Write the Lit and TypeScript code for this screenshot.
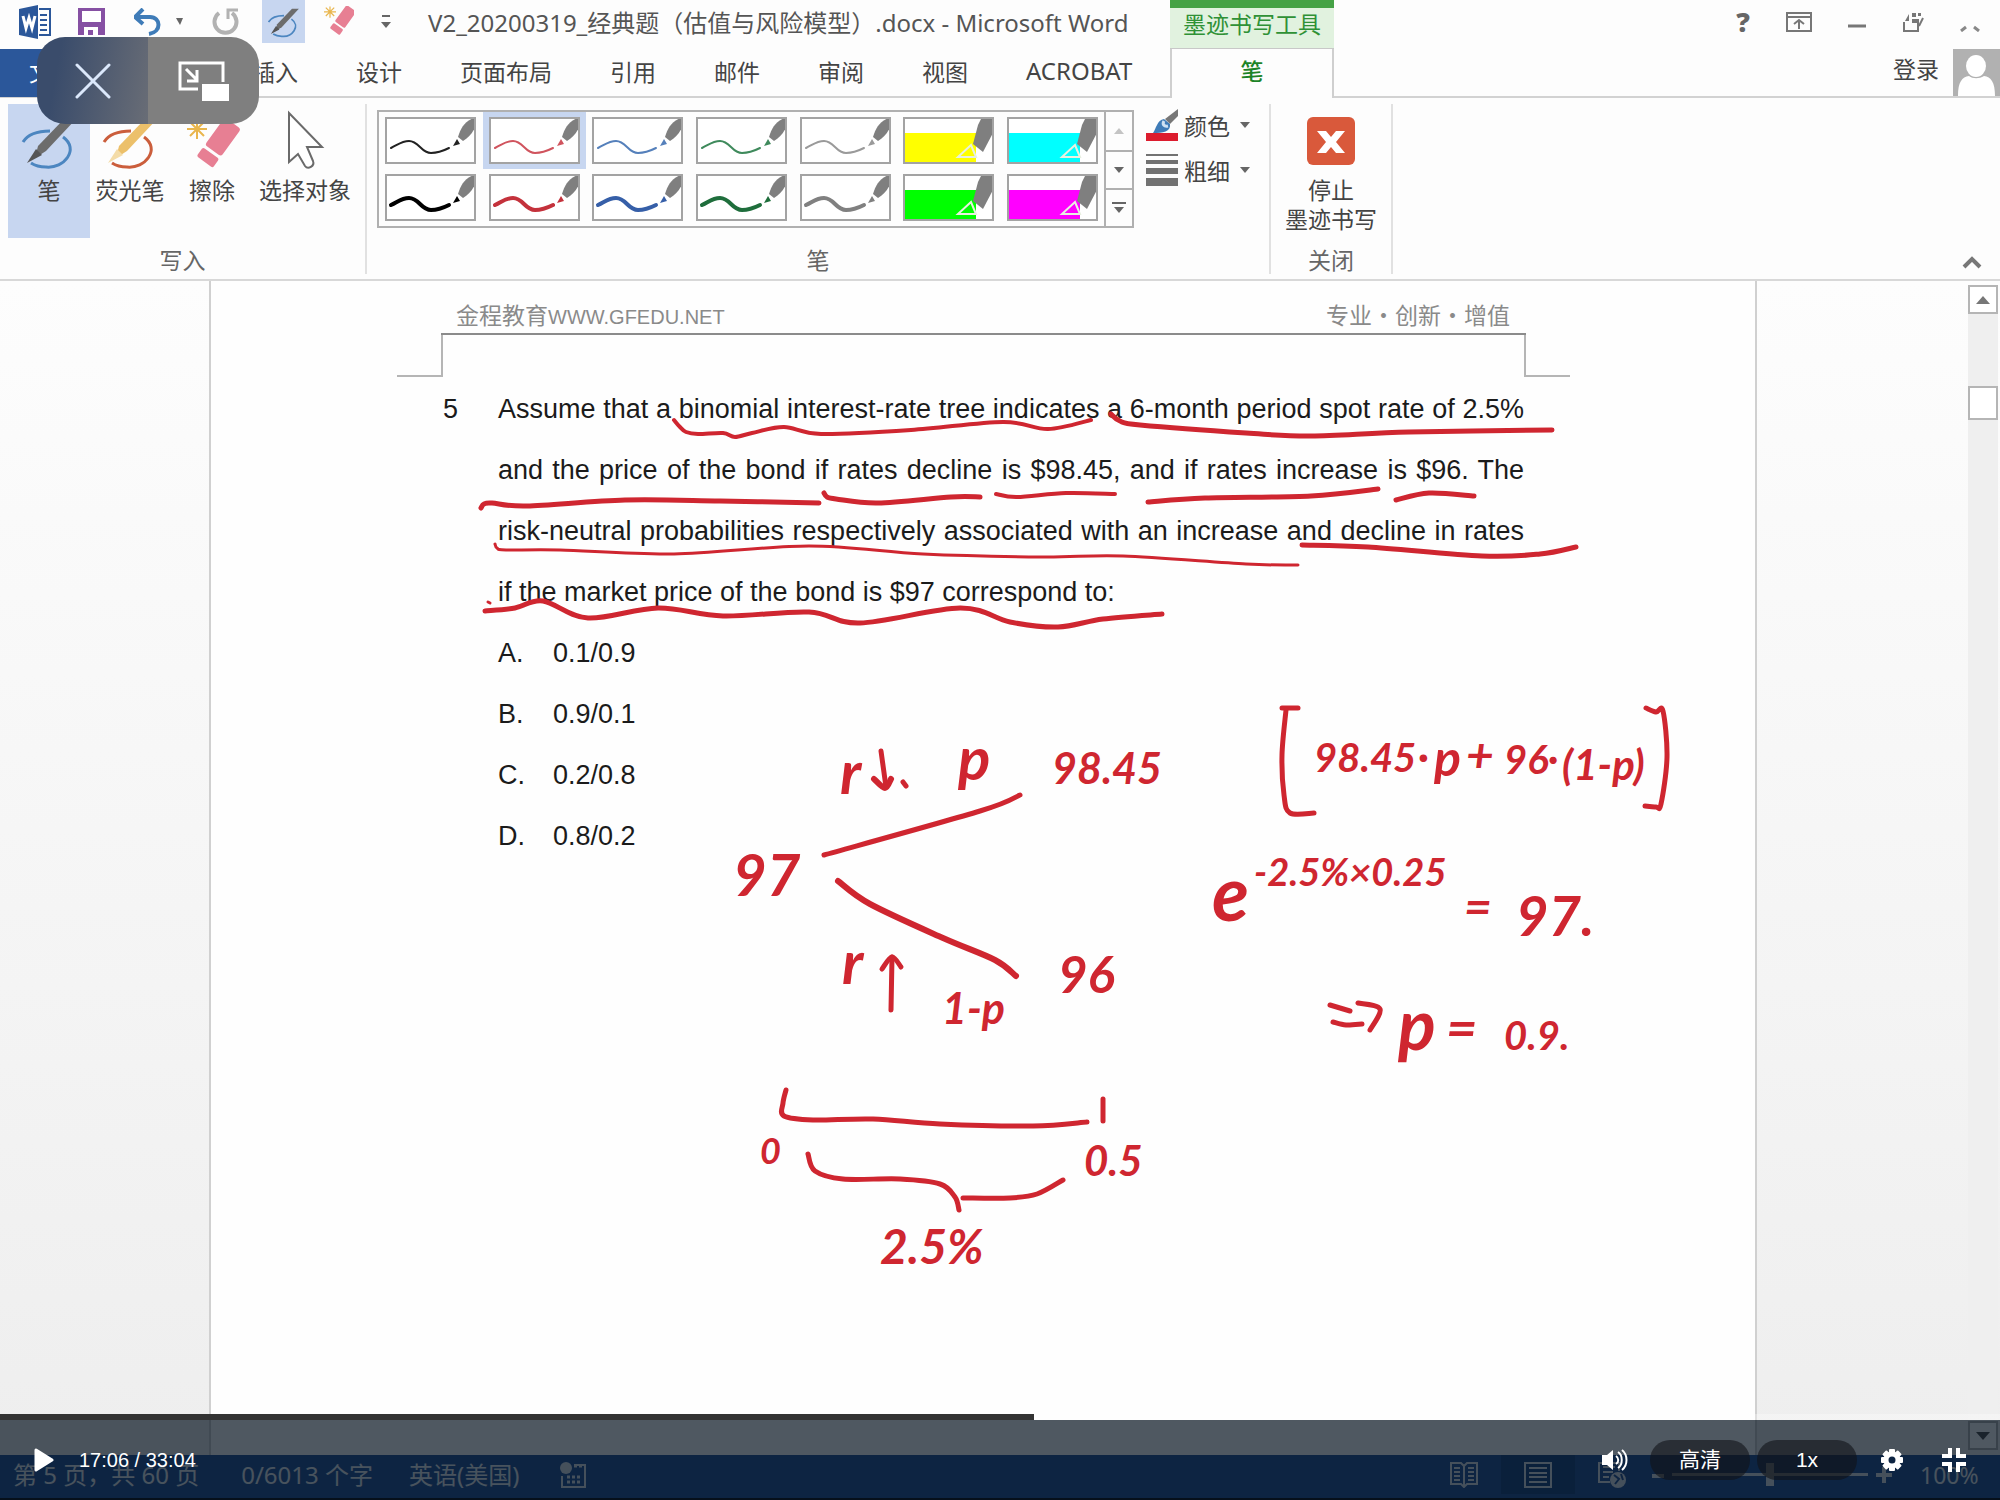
import { LitElement, html, svg, css } from "lit";
import { customElement } from "lit/decorators.js";
import { classMap } from "lit/directives/class-map.js";
import { styleMap } from "lit/directives/style-map.js";

type Point = [number, number];
interface Stroke { w: number; pts: Point[]; }
interface Note { x: number; y: number; size: number; text: string; }

/** Turns the sampled pen positions into one smooth curve. */
function smooth(pts: Point[]): string {
  let d = `M${pts[0][0]} ${pts[0][1]}`;
  for (let i = 0; i < pts.length - 1; i++) {
    const a = pts[i - 1] ?? pts[i];
    const b = pts[i];
    const c = pts[i + 1];
    const e = pts[i + 2] ?? c;
    d += `C${b[0] + (c[0] - a[0]) / 6} ${b[1] + (c[1] - a[1]) / 6} ${c[0] - (e[0] - b[0]) / 6} ${c[1] - (e[1] - b[1]) / 6} ${c[0]} ${c[1]}`;
  }
  return d;
}

const underlines: Stroke[] = [
  { w: 4, pts: [[674, 420], [680, 427], [686, 432], [698, 434], [723, 433], [735, 437], [752, 433], [784, 427], [821, 434], [911, 430], [1003, 422], [1048, 429], [1091, 420]] },
  { w: 5, pts: [[1111, 414], [1120, 421], [1140, 425], [1246, 433], [1311, 436], [1409, 432], [1552, 430]] },
  { w: 5, pts: [[481, 508], [484, 504], [492, 503], [527, 506], [625, 500], [720, 501], [819, 503]] },
  { w: 5, pts: [[824, 493], [827, 497], [836, 499], [878, 503], [951, 497], [980, 497]] },
  { w: 4, pts: [[996, 494], [1017, 497], [1066, 493], [1115, 494]] },
  { w: 5, pts: [[1148, 502], [1205, 498], [1311, 496], [1378, 489]] },
  { w: 5, pts: [[1396, 500], [1429, 493], [1474, 496]] },
  { w: 3, pts: [[495, 544], [497, 548], [506, 550], [560, 550], [674, 554], [809, 546], [923, 554], [1042, 557], [1123, 556], [1246, 564], [1298, 565]] },
  { w: 5, pts: [[1302, 545], [1368, 547], [1482, 556], [1540, 554], [1576, 547]] },
  { w: 5, pts: [[485, 611], [515, 608], [543, 601], [588, 618], [658, 608], [723, 616], [809, 612], [860, 623], [960, 608], [1010, 622], [1058, 627], [1103, 619], [1162, 614]] },
  { w: 3, pts: [[488, 602], [490, 603]] },
];

const diagram: Stroke[] = [
  { w: 5, pts: [[824, 855], [980, 811], [1020, 795]] },
  { w: 6, pts: [[838, 881], [870, 904], [943, 938], [995, 960], [1016, 976]] },
  { w: 5, pts: [[786, 1090], [783, 1103], [784, 1116], [813, 1120], [873, 1119], [940, 1124], [1033, 1126], [1087, 1122]] },
  { w: 5, pts: [[1103, 1099], [1103, 1121]] },
  { w: 5, pts: [[808, 1154], [815, 1171], [843, 1179], [900, 1179], [940, 1184], [955, 1197], [959, 1210]] },
  { w: 5, pts: [[963, 1198], [1010, 1198], [1037, 1194], [1063, 1180]] },
  { w: 5, pts: [[881, 751], [886, 787]] },
  { w: 6, pts: [[874, 779], [885, 788], [891, 779]] },
  { w: 5, pts: [[903, 782], [906, 786]] },
  { w: 5, pts: [[891, 1010], [892, 957]] },
  { w: 5, pts: [[882, 969], [892, 957], [901, 967]] },
  { w: 5, pts: [[1282, 708], [1298, 708]] },
  { w: 5, pts: [[1286, 710], [1282, 755], [1284, 795], [1290, 813], [1314, 813]] },
  { w: 5, pts: [[1646, 708], [1656, 712], [1663, 711], [1667, 757], [1661, 804], [1656, 807], [1645, 806]] },
  { w: 5, pts: [[1330, 1005], [1350, 1011]] },
  { w: 5, pts: [[1333, 1022], [1346, 1025], [1362, 1024]] },
  { w: 5, pts: [[1358, 1003], [1380, 1009], [1370, 1030]] },
];

const notes: Note[] = [
  { x: 840, y: 794, size: 60, text: "r" },
  { x: 958, y: 780, size: 60, text: "p" },
  { x: 1052, y: 784, size: 43, text: "98.45" },
  { x: 733, y: 896, size: 58, text: "97" },
  { x: 842, y: 984, size: 60, text: "r" },
  { x: 942, y: 1024, size: 43, text: "1-p" },
  { x: 1058, y: 993, size: 51, text: "96" },
  { x: 760, y: 1164, size: 36, text: "0" },
  { x: 1084, y: 1176, size: 42, text: "0.5" },
  { x: 880, y: 1264, size: 48, text: "2.5%" },
  { x: 1314, y: 772, size: 40, text: "98.45" },
  { x: 1418, y: 770, size: 40, text: "·" },
  { x: 1434, y: 776, size: 50, text: "p" },
  { x: 1466, y: 772, size: 48, text: "+" },
  { x: 1504, y: 774, size: 40, text: "96" },
  { x: 1548, y: 772, size: 38, text: "·" },
  { x: 1562, y: 780, size: 42, text: "(1-p)" },
  { x: 1212, y: 921, size: 76, text: "e" },
  { x: 1254, y: 886, size: 38, text: "-2.5%×0.25" },
  { x: 1464, y: 924, size: 48, text: "=" },
  { x: 1516, y: 936, size: 56, text: "97." },
  { x: 1398, y: 1050, size: 70, text: "p" },
  { x: 1446, y: 1047, size: 54, text: "=" },
  { x: 1504, y: 1050, size: 40, text: "0.9." },
];

interface Pen { color: string; weight: number; marker?: boolean; name: string; on?: boolean; }
const pens: Pen[] = [
  { name: "黑色细笔", color: "#222", weight: 2 },
  { name: "红色细笔", color: "#d0545e", weight: 2, on: true },
  { name: "蓝色细笔", color: "#5580bb", weight: 2 },
  { name: "绿色细笔", color: "#3f8a5c", weight: 2 },
  { name: "灰色细笔", color: "#9a9a9a", weight: 2 },
  { name: "黄色荧光笔", color: "#ffff00", weight: 0, marker: true },
  { name: "青色荧光笔", color: "#00ffff", weight: 0, marker: true },
  { name: "黑色粗笔", color: "#000", weight: 4 },
  { name: "红色粗笔", color: "#c4323c", weight: 4 },
  { name: "蓝色粗笔", color: "#365fa8", weight: 4 },
  { name: "绿色粗笔", color: "#1f6e3c", weight: 4 },
  { name: "灰色粗笔", color: "#808080", weight: 4 },
  { name: "绿色荧光笔", color: "#00ff00", weight: 0, marker: true },
  { name: "品红荧光笔", color: "#ff00ff", weight: 0, marker: true },
];

const penPreview = (p: Pen) => html`<svg class="preview" viewBox="2 2 87 43" preserveAspectRatio="none" aria-hidden="true">
  ${p.marker
    ? svg`<rect x="0" y="16" width="73" height="30" fill=${p.color}></rect>
        <path d="M68 28 55 40 73 40z" fill="none" stroke="#e8f0e0" stroke-width="2"></path>
        <path d="M70 27 75 8 79 0 91 0 91 14 80 35z" fill="#7f7f7f"></path>`
    : svg`<path d="M6 31C14 27 17 24 24 24 34 24 36 36 46 36 53 36 58 34 64 31" fill="none" stroke=${p.color} stroke-width=${p.weight} stroke-linecap="round"></path>
        <path d="M68 29 72 22 75 27z" fill=${p.color}></path>
        <path d="M73 20C76 10 80 4 91 0L91 8C89 14 84 21 78 24z" fill="#7f7f7f"></path>`}
</svg>`;

const caret = html`<svg class="caret" viewBox="0 0 10 6" aria-hidden="true"><path d="M0 0H10L5 6z" fill="#666"></path></svg>`;

const penIcon = (ring: string, body: string, tip: string) => svg`
  <path d="M1 19C6 11 16 8 28 8" fill="none" stroke=${ring} stroke-width="3"></path>
  <path d="M41 14C58 26 42 46 24 44 17 44 12 42 9 40" fill="none" stroke=${ring} stroke-width="3"></path>
  <path d="M42 -4H54L24 28 13 35 16 23z" fill=${body}></path>
  <path d="M14 26 20 32 5 40z" fill=${tip}></path>`;

const eraserIcon = svg`
  <g stroke="#e9b64d" stroke-width="2"><path d="M10 0V19M0 9H20M3 2 17 16M17 2 3 16"></path></g>
  <g transform="rotate(36 32 24)"><rect x="21" y="-1" width="20" height="34" rx="3" fill="#e77f93"></rect>
  <rect x="21" y="36" width="20" height="11" rx="2" fill="#e77f93"></rect></g>`;

@customElement("app-root")
export class AppRoot extends LitElement {
  static styles = css`
    :host { display: block; color: #444; font: 23px/30px "Noto Sans CJK SC", sans-serif; }
    * { box-sizing: border-box; }
    button { margin: 0; padding: 0; border: 0; background: none; color: inherit; font: inherit; }
    svg { display: block; flex: none; }
    .app { position: relative; display: flex; flex-direction: column; min-height: 100vh; overflow: hidden; background: #fdfdfd; }

    .top { display: grid; grid-template-columns: 1170px 164px 1fr; grid-template-rows: 49px 49px; }
    .quick { display: flex; align-items: flex-start; padding-left: 18px; }
    .quick button { height: 43px; display: grid; place-items: center; }
    .q-word { width: 34px; } .q-save { width: 27px; margin-left: 26px; }
    .q-undo { width: 30px; margin-left: 28px; } .q-more { width: 22px; margin-left: 5px; }
    .q-redo { width: 28px; margin-left: 22px; }
    .q-pen { width: 43px; margin-left: 22px; background: #c7d6f0; }
    .q-eraser { width: 32px; margin-left: 18px; } .q-over { width: 20px; margin-left: 21px; }
    .title { margin: 0 0 0 32px; font: 400 24px/46px "Noto Sans", "Noto Sans CJK SC", sans-serif; color: #555; white-space: nowrap; }
    .context { border-top: 8px solid #45a245; border-bottom: 1px solid #c8c8c8; background: #e1f2df; color: #2f9136; text-align: center; line-height: 30px; }
    .window { display: flex; justify-content: flex-end; align-items: center; gap: 36px; padding: 0 20px 6px 0; }
    .window button { display: grid; place-items: center; }
    .help { font: 900 27px/27px "Open Sans", sans-serif; color: #666; }
    .tabs { display: flex; border-bottom: 2px solid #d2d2d2; line-height: 42px; }
    .tabs button { padding: 0 29px 4px; white-space: nowrap; }
    .tabs .file { width: 119px; background: #2b579a; color: #fff; text-align: left; margin-bottom: -1px; }
    .tabs .acrobat { font-family: "Noto Sans", sans-serif; font-size: 24px; }
    .pen-tab { padding-bottom: 6px; border: 2px solid #cfcfcf; border-width: 0 2px; color: #1d8427; font-weight: 500; line-height: 43px; }
    .account { display: flex; justify-content: flex-end; gap: 14px; border-bottom: 2px solid #d2d2d2; line-height: 38px; }
    .login { color: inherit; text-decoration: none; }
    .avatar { width: 47px; height: 47px; }

    .ribbon { display: flex; padding: 6px 0 5px; border-bottom: 2px solid #d8d8d8; }
    .group { display: flex; flex-direction: column; border-right: 2px solid #e1e1e1; }
    .group-body { display: flex; height: 142px; align-items: flex-start; }
    .group-name { text-align: center; color: #666; line-height: 26px; padding-bottom: 2px; }
    .write { width: 367px; }
    .write .group-body { padding-left: 8px; }
    .tool { display: flex; flex-direction: column; align-items: center; gap: 2px; padding-top: 16px; height: 134px; white-space: nowrap; }
    .tool.pen { width: 82px; background: #c7d6f0; } .tool.marker { width: 80px; }
    .tool.eraser { width: 84px; } .tool.select { width: 102px; }
    .tool svg { overflow: visible; }
    .pens { width: 904px; }
    .pens .group-body { padding-left: 10px; }
    .gallery { display: flex; width: 757px; margin-top: 6px; border: 2px solid #b0b0b0; }
    .swatches { flex: 1; display: grid; grid-template-columns: repeat(7, 1fr); grid-auto-rows: 57px; }
    .swatch { display: grid; place-items: center; }
    .swatch.on { background: #c7d6f0; }
    .preview { width: 91px; height: 47px; border: 2px solid #a3a3a3; background: #fff; }
    .scroll { width: 28px; border-left: 2px solid #b0b0b0; display: grid; grid-template-rows: repeat(3, 1fr); }
    .scroll button { display: grid; place-items: center; }
    .scroll button + button { border-top: 2px solid #b0b0b0; }
    .options { margin-left: 12px; }
    .options button { display: flex; align-items: center; gap: 6px; height: 45px; padding-bottom: 4px; }
    .caret { width: 10px; height: 6px; }
    .options .caret { margin-left: 4px; }
    .close { width: 122px; }
    .stop { flex: 1; display: flex; flex-direction: column; align-items: center; gap: 10px; padding-top: 13px; line-height: 29px; white-space: nowrap; }
    .collapse { align-self: flex-end; margin: 0 18px 5px auto; }

    .document { flex: 1; display: flex; background: linear-gradient(#fdfdfd, #eee); }
    .page { position: relative; flex: 1; margin-left: 209px; padding: 0 185px 0 186px; min-height: 1100px; border: 2px solid #d0d0d0; border-width: 0 2px; background: #fefefe; }
    .gutter { width: 211px; }
    .ink { position: absolute; left: -2px; top: 0; width: 1548px; height: 1130px; overflow: visible; pointer-events: none; }
    .ink path { fill: none; stroke: #cf2630; stroke-linecap: round; stroke-linejoin: round; }
    .ink text { fill: #cf2630; font-family: Lato, sans-serif; font-style: italic; font-weight: 700; }
    .head { display: flex; justify-content: space-between; margin: 0 44px; padding: 15px 16px 0 15px; border-bottom: 2px solid #8b8b8b; color: #8a8a8a; height: 54px; line-height: 36px; }
    .head .site { font: 20px/36px "Liberation Sans", sans-serif; }
    .marks { display: flex; justify-content: space-between; height: 42px; }
    .mark { width: 46px; border: 2px solid #b5b5b5; border-width: 0 2px 2px 0; }
    .mark.end { border-width: 0 0 2px 2px; }
    .question { display: grid; grid-template-columns: 55px 1fr; margin: 2px 46px 0; color: #1b1b1b; font: 27px/61px "Liberation Sans", sans-serif; }
    .question p, .answers { margin: 0; }
    .full { display: block; text-align: justify; text-align-last: justify; white-space: nowrap; }
    .answers { grid-column: 2; padding: 0; list-style: none; }
    .answers li { display: grid; grid-template-columns: 55px 1fr; }
    .bar { width: 30px; margin: 4px 2px 5px 0; display: flex; flex-direction: column; background: #efefef; }
    .bar button { height: 29px; border: 2px solid #b5b5b5; display: grid; place-items: center; background: #fff; }
    .thumb { height: 34px; margin-top: 72px; border: 2px solid #b5b5b5; background: #fff; }
    .bar .down { margin-top: auto; }

    .status { display: flex; align-items: center; height: 45px; padding: 0 18px 4px 13px; border-bottom: 2px solid #14181f; background: #2b579a; color: #e8eef2; white-space: nowrap; font-size: 24px; font-family: "Noto Sans", "Noto Sans CJK SC", sans-serif; }
    .status .words { margin-left: 42px; } .status .lang { margin: 0 41px 0 36px; }
    .views { display: flex; align-self: stretch; margin-left: auto; }
    .views button { width: 74px; display: grid; place-items: center; }
    .views .on { background: #234a86; }
    .zoom { display: flex; align-items: center; gap: 8px; margin-left: 3px; }
    .zoom input { appearance: none; width: 196px; height: 24px; margin: 0; background: linear-gradient(#dde4ec, #dde4ec) center / 100% 3px no-repeat; }
    .zoom input::-webkit-slider-thumb { appearance: none; width: 8px; height: 23px; background: #dde4ec; }
    .zoom output { width: 62px; margin-left: 20px; font-size: 23px; }

    .pip { position: absolute; left: 37px; top: 37px; width: 222px; height: 87px; display: grid; grid-template-columns: 1fr 1fr; border-radius: 28px; overflow: hidden; }
    .pip button { display: grid; place-items: center; background: #7f7f7f; }
    .pip .exit { background: linear-gradient(100deg, #3a4c6b 20%, #696d76); }
    .player { position: absolute; left: 0; right: 0; bottom: 0; color: #fff; }
    .seek { appearance: none; display: block; width: 100%; height: 6px; margin: 0; }
    .seek::-webkit-slider-thumb { appearance: none; width: 0; height: 0; }
    .controls { display: flex; align-items: center; height: 80px; padding: 0 34px; background: rgba(0, 13, 26, 0.69); }
    .controls button { display: grid; place-items: center; }
    .time { margin-left: 25px; font: 20px/30px "Liberation Sans", sans-serif; }
    .volume { margin: 0 22px 0 auto; }
    .controls .pill { width: 100px; height: 40px; margin-right: 7px; border-radius: 20px; background: rgba(16, 18, 24, 0.6); font: 21px/40px "Liberation Sans", "Noto Sans CJK SC", sans-serif; }
    .controls .gear { margin: 0 38px 0 16px; }
  `;

  private renderTop() {
    return html`<header class="top">
      <div class="quick">
        <button class="q-word" aria-label="Word"><svg width="34" height="34" viewBox="0 0 34 34">
          <path d="M1 4 20 0V34L1 30z" fill="#2b579a"></path><path d="M21 4H32V30H21" fill="none" stroke="#2b579a" stroke-width="2"></path>
          <path d="M22 10H29M22 15H29M22 20H29M22 25H29" stroke="#2b579a" stroke-width="2"></path>
          <path d="M5 11 8 23 11 13 14 23 17 11" fill="none" stroke="#fff" stroke-width="3"></path></svg></button>
        <button class="q-save" aria-label="保存"><svg width="27" height="27" viewBox="0 0 27 27">
          <path d="M0 0H27V27H0z" fill="#8650a3"></path><path d="M4 3H23V14H4z" fill="#fff"></path><path d="M6 19H20V27H15V22H10V27H6z" fill="#fff"></path></svg></button>
        <button class="q-undo" aria-label="撤消"><svg width="28" height="28" viewBox="0 0 28 28">
          <path d="M3 9H16C27 9 28 24 15 26" fill="none" stroke="#3f7cb8" stroke-width="4"></path><path d="M9 1 1 9 9 16" fill="none" stroke="#3f7cb8" stroke-width="4"></path></svg></button>
        <button class="q-more" aria-label="撤消列表"><svg width="7" height="7" viewBox="0 0 7 7"><path d="M0 0H7L4 7z" fill="#666"></path></svg></button>
        <button class="q-redo" aria-label="重复"><svg width="28" height="28" viewBox="0 0 28 28">
          <path d="M7 5A11 11 0 1 0 20 5" fill="none" stroke="#b2b2b2" stroke-width="4"></path><path d="M16 11V2H26" fill="none" stroke="#b2b2b2" stroke-width="3"></path></svg></button>
        <button class="q-pen" aria-label="笔"><svg width="32" height="36" viewBox="0 -10 56 58">${penIcon("#4c86c0", "#6c6c6c", "#555")}</svg></button>
        <button class="q-eraser" aria-label="橡皮擦"><svg width="30" height="32" viewBox="0 0 50 52">${eraserIcon}</svg></button>
        <button class="q-over" aria-label="自定义"><svg width="10" height="14" viewBox="0 0 10 14"><path d="M1 1H9" stroke="#666" stroke-width="2"></path><path d="M0 7H10L5 13z" fill="#666"></path></svg></button>
        <h1 class="title">V2_20200319_经典题（估值与风险模型）.docx - Microsoft Word</h1>
      </div>
      <div class="context">墨迹书写工具</div>
      <div class="window">
        <button class="help" aria-label="帮助">?</button>
        <button aria-label="功能区显示选项"><svg width="26" height="20" viewBox="0 0 26 20"><path d="M1 1H25V19H1zM1 5H25M13 17V8M8 12 13 8 18 12" fill="none" stroke="#777" stroke-width="2"></path></svg></button>
        <button aria-label="最小化"><svg width="18" height="20" viewBox="0 0 18 20"><path d="M0 14H18" stroke="#777" stroke-width="3"></path></svg></button>
        <button aria-label="还原"><svg width="22" height="20" viewBox="0 0 22 20"><path d="M2 10V19H16V10" fill="none" stroke="#777" stroke-width="2"></path><path d="M3 9 7 2V9zM10 1H14V5H10zM16 1H19V4H16zM10 7H17V11H10z" fill="#777"></path><path d="M21 6 17 14" stroke="#777" stroke-width="2"></path></svg></button>
        <button aria-label="关闭"><svg width="20" height="20" viewBox="0 0 20 20"><path d="M1 19 6 15M14 15 19 19" stroke="#888" stroke-width="3"></path></svg></button>
      </div>
      <nav class="tabs">
        <button class="file">文件</button><button>开始</button><button>插入</button><button>设计</button><button>页面布局</button><button>引用</button><button>邮件</button><button>审阅</button><button>视图</button><button class="acrobat">ACROBAT</button>
      </nav>
      <button class="pen-tab">笔</button>
      <div class="account"><a class="login" href="#login">登录</a>
        <svg class="avatar" viewBox="0 0 47 47" role="img" aria-label="用户"><path d="M0 0H47V47H0z" fill="#b1b1b1"></path><ellipse cx="23" cy="17" rx="10" ry="11" fill="#fff"></ellipse><path d="M5 47C5 33 9 28 16 27 20 30 26 30 31 27 38 28 42 33 42 47z" fill="#fff"></path></svg>
      </div>
    </header>`;
  }

  private renderRibbon() {
    return html`<section class="ribbon">
      <div class="group write">
        <div class="group-body">
          <button class="tool pen"><svg width="54" height="52" viewBox="0 -3 54 52">${penIcon("#4c86c0", "#6c6c6c", "#555")}</svg>笔</button>
          <button class="tool marker"><svg width="54" height="52" viewBox="0 -3 54 52">${penIcon("#cb5e3c", "#ecc06a", "#f4dca8")}</svg>荧光笔</button>
          <button class="tool eraser"><svg width="50" height="52" viewBox="0 0 50 52">${eraserIcon}</svg>擦除</button>
          <button class="tool select"><svg width="40" height="52" viewBox="0 0 40 52"><path d="M4 -7V42L13 34 20 46C23 50 30 46 28 41L22 27H37z" fill="#fff" stroke="#6a6a6a" stroke-width="2"></path></svg>选择对象</button>
        </div>
        <div class="group-name">写入</div>
      </div>
      <div class="group pens">
        <div class="group-body">
          <div class="gallery">
            <div class="swatches">${pens.map((p) => html`<button class=${classMap({ swatch: true, on: !!p.on })} aria-label=${p.name}>${penPreview(p)}</button>`)}</div>
            <div class="scroll">
              <button aria-label="上一行"><svg width="10" height="6" viewBox="0 0 10 6"><path d="M0 6H10L5 0z" fill="#c4c4c4"></path></svg></button>
              <button aria-label="下一行">${caret}</button>
              <button aria-label="其他"><svg width="14" height="12" viewBox="0 0 14 12"><path d="M0 1H14" stroke="#666" stroke-width="2"></path><path d="M2 5H12L7 11z" fill="#666"></path></svg></button>
            </div>
          </div>
          <div class="options">
            <button><svg width="32" height="34" viewBox="0 0 32 34"><path d="M32 1V8L24 16 19 11z" fill="#777"></path><path d="M7 25C10 21 11 12 18 11L24 16C25 24 17 25 7 25z" fill="#3f7cb8"></path><path d="M18 13C16 16 18 19 22 18" fill="none" stroke="#cfe2f3" stroke-width="3"></path><rect y="25" width="32" height="8" fill="#dc1c2e"></rect></svg>颜色${caret}</button>
            <button><svg width="32" height="32" viewBox="0 0 32 32"><path d="M0 0H32V2H0zM0 6H32V10H0zM0 14H32V20H0zM0 24H32V32H0z" fill="#727272"></path></svg>粗细${caret}</button>
          </div>
        </div>
        <div class="group-name">笔</div>
      </div>
      <div class="group close">
        <div class="group-body">
          <button class="stop"><svg width="48" height="48" viewBox="0 0 48 48"><rect width="48" height="48" rx="6" fill="#d9593b"></rect><path d="M10 14H19L24 20 29 14H38L29 25 38 36H29L24 30 19 36H10L19 25z" fill="#fff"></path></svg><span>停止<br>墨迹书写</span></button>
        </div>
        <div class="group-name">关闭</div>
      </div>
      <button class="collapse" aria-label="折叠功能区"><svg width="20" height="14" viewBox="0 0 20 14"><path d="M2 12 10 4 18 12" fill="none" stroke="#777" stroke-width="4"></path></svg></button>
    </section>`;
  }

  private renderDocument() {
    const rows = ["Assume that a binomial interest-rate tree indicates a 6-month period spot rate of 2.5%", "and the price of the bond if rates decline is $98.45, and if rates increase is $96. The", "risk-neutral probabilities respectively associated with an increase and decline in rates"];
    const answers = ["0.1/0.9", "0.9/0.1", "0.2/0.8", "0.8/0.2"];
    return html`<main class="document">
      <article class="page">
        <div class="head"><span>金程教育<span class="site">WWW.GFEDU.NET</span></span><span>专业・创新・增值</span></div>
        <div class="marks"><span class="mark"></span><span class="mark end"></span></div>
        <div class="question">
          <span>5</span>
          <p>${rows.map((r) => html`<span class="full">${r}</span>`)}if the market price of the bond is $97 correspond to:</p>
          <ul class="answers">${answers.map((a, i) => html`<li><span>${"ABCD"[i]}.</span><span>${a}</span></li>`)}</ul>
        </div>
        <svg class="ink" viewBox="209 281 1548 1130">
          ${[...underlines, ...diagram].map((s) => svg`<path d=${smooth(s.pts)} stroke-width=${s.w}></path>`)}
          ${notes.map((n) => svg`<text x=${n.x} y=${n.y} font-size=${n.size}>${n.text}</text>`)}
        </svg>
      </article>
      <div class="gutter"></div>
      <div class="bar">
        <button aria-label="向上滚动"><svg width="14" height="8" viewBox="0 0 14 8"><path d="M0 8H14L7 0z" fill="#777"></path></svg></button>
        <div class="thumb"></div>
        <button class="down" aria-label="向下滚动"><svg width="14" height="8" viewBox="0 0 14 8"><path d="M0 0H14L7 8z" fill="#555"></path></svg></button>
      </div>
    </main>`;
  }

  private renderStatus() {
    return html`<footer class="status">
      <span>第 5 页，共 60 页</span><span class="words">0/6013 个字</span><span class="lang">英语(美国)</span>
      <svg width="26" height="26" viewBox="0 0 26 26"><circle cx="6" cy="6" r="6" fill="#dde4ec"></circle><path d="M14 3H25V25H2V14" fill="none" stroke="#dde4ec" stroke-width="2"></path><path d="M14 4H25M7 15H22M7 20H22" stroke="#dde4ec" stroke-width="3" stroke-dasharray="3 2"></path></svg>
      <div class="views">
        <button aria-label="阅读视图"><svg width="28" height="26" viewBox="0 0 28 26"><path d="M1 1H11L14 4 17 1H27V22H17L14 25 11 22H1zM14 4V25M4 6H10M4 10H10M4 14H10M4 18H10M18 6H24M18 10H24M18 14H24M18 18H24" fill="none" stroke="#dde4ec" stroke-width="2"></path></svg></button>
        <button class="on" aria-label="页面视图"><svg width="28" height="26" viewBox="0 0 28 26"><path d="M1 1H27V25H1zM5 6H23M5 11H23M5 15H23M5 20H23" fill="none" stroke="#dde4ec" stroke-width="2"></path></svg></button>
        <button aria-label="Web 版式视图"><svg width="28" height="26" viewBox="0 0 28 26"><path d="M12 20H1V1H21V9M5 5H17M5 10H15M5 15H11" fill="none" stroke="#dde4ec" stroke-width="2"></path><circle cx="20" cy="18" r="8" fill="#dde4ec"></circle><path d="M16 13 21 17 17 22M23 12 25 18" fill="none" stroke="#2b579a" stroke-width="2"></path></svg></button>
      </div>
      <div class="zoom">
        <svg width="12" height="16" viewBox="0 0 12 16"><path d="M0 9H12" stroke="#dde4ec" stroke-width="4"></path></svg>
        <input type="range" min="0" max="200" value="100" aria-label="缩放">
        <svg width="16" height="16" viewBox="0 0 16 16"><path d="M0 8H16M8 0V16" stroke="#dde4ec" stroke-width="4"></path></svg>
        <output>100%</output>
      </div>
    </footer>`;
  }

  private renderPlayer() {
    const now = 17 * 60 + 6;
    const total = 33 * 60 + 4;
    const share = (100 * now) / total;
    const teeth = [0, 45, 90, 135, 180, 225, 270, 315];
    return html`
      <div class="pip">
        <button class="exit" aria-label="关闭"><svg width="36" height="36" viewBox="0 0 36 36"><path d="M2 2 34 34M34 2 2 34" stroke="#dbe8fb" stroke-width="3" stroke-linecap="round"></path></svg></button>
        <button aria-label="画中画"><svg width="51" height="40" viewBox="0 0 51 40"><path d="M20 28H2V2H45V21" fill="none" stroke="#fff" stroke-width="3"></path><path d="M24 23H51V40H24z" fill="#fff"></path><path d="M8 8 19 19M19 9V20H9" fill="none" stroke="#fff" stroke-width="3"></path></svg></button>
      </div>
      <div class="player">
        <input class="seek" type="range" min="0" max=${total} value=${now} aria-label="播放进度" style=${styleMap({ background: `linear-gradient(to right, #333 ${share}%, rgba(255,255,255,.3) ${share}%)` })}>
        <div class="controls">
          <button aria-label="播放"><svg width="20" height="24" viewBox="0 0 20 24"><path d="M2 2V22L18 12z" fill="#fff" stroke="#fff" stroke-width="3" stroke-linejoin="round"></path></svg></button>
          <span class="time">17:06 / 33:04</span>
          <button class="volume" aria-label="音量"><svg width="26" height="24" viewBox="0 0 26 24"><path d="M0 7H5L11 2V22L5 17H0z" fill="#fff"></path><path d="M14 8C17 10 17 14 14 16M16 4C21 7 21 17 16 20M20 2C26 7 26 17 20 22" fill="none" stroke="#fff" stroke-width="2"></path></svg></button>
          <button class="pill">高清</button><button class="pill">1x</button>
          <button class="gear" aria-label="设置"><svg width="24" height="24" viewBox="-12 -12 24 24">${teeth.map((a) => svg`<rect x="-3" y="-11" width="6" height="6" rx="1" fill="#fff" transform=${`rotate(${a})`}></rect>`)}<circle r="6" fill="none" stroke="#fff" stroke-width="5"></circle></svg></button>
          <button aria-label="退出全屏"><svg width="24" height="24" viewBox="0 0 24 24"><path d="M0 8H8V0M16 0V8H24M24 16H16V24M8 24V16H0" fill="none" stroke="#fff" stroke-width="4"></path></svg></button>
        </div>
      </div>`;
  }

  render() {
    return html`<div class="app">${this.renderTop()}${this.renderRibbon()}${this.renderDocument()}${this.renderStatus()}${this.renderPlayer()}</div>`;
  }
}
